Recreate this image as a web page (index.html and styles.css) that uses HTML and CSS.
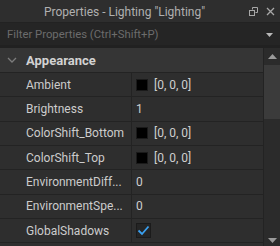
FILE: index.html
```html
<!DOCTYPE html>
<html>
<head>
<meta charset="utf-8">
<link rel="stylesheet" href="styles.css">
</head>
<body>
<div class="panel">
  <div class="titlebar">
    <div class="title">Properties - Lighting "Lighting"</div>
    <div class="title-icons">
      <svg class="ico" width="9" height="9" viewBox="0 0 9 9"><path d="M3.5 2.5V0.5H8.5V5.5H6.5" fill="none" stroke="#a8a8a8" stroke-width="1"/><rect x="0.5" y="3.5" width="5" height="5" fill="none" stroke="#a8a8a8" stroke-width="1"/></svg>
      <svg class="ico" width="9" height="9" viewBox="0 0 9 9"><path d="M1 1L8 8M8 1L1 8" stroke="#a8a8a8" stroke-width="1.3"/></svg>
    </div>
  </div>
  <div class="filter">
    <span class="filter-text">Filter Properties (Ctrl+Shift+P)</span>
    <svg class="caret" width="7" height="4" viewBox="0 0 7 4"><path d="M0 0H7L3.5 4Z" fill="#b8b8b8"/></svg>
  </div>
  <div class="body">
    <div class="grid">
      <div class="group">
        <svg class="chev" width="10" height="6" viewBox="0 0 10 6"><path d="M1 1L5 5L9 1" fill="none" stroke="#7c7c7c" stroke-width="1.3"/></svg>
        <span>Appearance</span>
      </div>
      <div class="row"><div class="name">Ambient</div><div class="val"><span class="sw"></span>[0, 0, 0]</div></div>
      <div class="row"><div class="name">Brightness</div><div class="val">1</div></div>
      <div class="row"><div class="name">ColorShift_Bottom</div><div class="val"><span class="sw"></span>[0, 0, 0]</div></div>
      <div class="row"><div class="name">ColorShift_Top</div><div class="val"><span class="sw"></span>[0, 0, 0]</div></div>
      <div class="row"><div class="name">EnvironmentDiff...</div><div class="val">0</div></div>
      <div class="row"><div class="name">EnvironmentSpe...</div><div class="val">0</div></div>
      <div class="row"><div class="name">GlobalShadows</div><div class="val"><span class="cb"><svg width="13" height="11" viewBox="0 0 13 11"><path d="M1.5 5.5L5 9L11.5 1.5" fill="none" stroke="#3aa0f0" stroke-width="1.8"/></svg></span></div></div>
    </div>
    <div class="scrollbar">
      <div class="sb-btn"><svg width="9" height="5" viewBox="0 0 9 5"><path d="M0 5H9L4.5 0Z" fill="#9a9a9a"/></svg></div>
      <div class="thumb"></div>
      <div class="track"></div>
      <div class="sb-btn sb-btn-down"><svg width="9" height="5" viewBox="0 0 9 5"><path d="M0 0H9L4.5 5Z" fill="#9a9a9a"/></svg></div>
    </div>
  </div>
</div>
</body>
</html>
```
FILE: styles.css
```css
* { box-sizing: border-box; }
html, body { margin: 0; padding: 0; }
body {
  width: 280px;
  height: 246px;
  overflow: hidden;
  background: #2e2e2e;
  font-family: Roboto, "Liberation Sans", sans-serif;
  font-size: 12px;
  color: #cccccc;
}
.panel { display: flex; flex-direction: column; height: 246px; }
.titlebar {
  height: 23px;
  flex: none;
  display: flex;
  align-items: center;
  background: #2e2e2e;
  border-bottom: 1px solid #222222;
}
.title {
  flex: 1;
  text-align: center;
  color: #b0b0b0;
  font-size: 12px;
  padding-top: 1px;
}
.title-icons {
  display: flex;
  gap: 8px;
  padding-right: 5px;
  align-items: center;
}
.ico { display: block; }
.filter {
  height: 25px;
  flex: none;
  display: flex;
  align-items: center;
  background: #252525;
  border-bottom: 3px solid #212121;
  padding: 0 7px;
}
.filter-text { flex: 1; color: #6c6c6c; font-size: 11.3px; }
.caret { display: block; margin-top: 1px; }
.body { flex: 1; display: flex; min-height: 0; }
.grid { flex: 1; display: flex; flex-direction: column; }
.group {
  height: 25px;
  flex: none;
  display: flex;
  align-items: center;
  background: #353535;
  border-bottom: 1px solid #232323;
  font-weight: bold;
  font-size: 13px;
  color: #d2d2d2;
  padding-left: 7px;
  gap: 9px;
}
.chev { display: block; }
.row {
  height: 24.35px;
  flex: none;
  display: flex;
  border-bottom: 1px solid #232323;
}
.name {
  width: 132px;
  flex: none;
  padding-left: 26px;
  display: flex;
  align-items: center;
  border-right: 1px solid #232323;
  white-space: nowrap;
  overflow: hidden;
}
.val {
  flex: 1;
  display: flex;
  align-items: center;
  padding-left: 4px;
  gap: 6px;
  color: #cfcfcf;
}
.sw {
  width: 12px;
  height: 12px;
  background: #000000;
  border: 1px solid #1a1a1a;
}
.cb {
  width: 15px;
  height: 15px;
  background: #252525;
  border: 1px solid #1b1b1b;
  display: flex;
  align-items: center;
  justify-content: center;
}
.cb svg { display: block; }
.scrollbar {
  width: 17px;
  flex: none;
  display: flex;
  flex-direction: column;
  background: #2b2b2b;
  border-left: 1px solid #232323;
}
.sb-btn {
  height: 17px;
  flex: none;
  display: flex;
  align-items: center;
  justify-content: center;
}
.sb-btn-down { height: 12px; }
.thumb { height: 54px; flex: none; background: #3b3b3b; }
.track { flex: 1; }
```
